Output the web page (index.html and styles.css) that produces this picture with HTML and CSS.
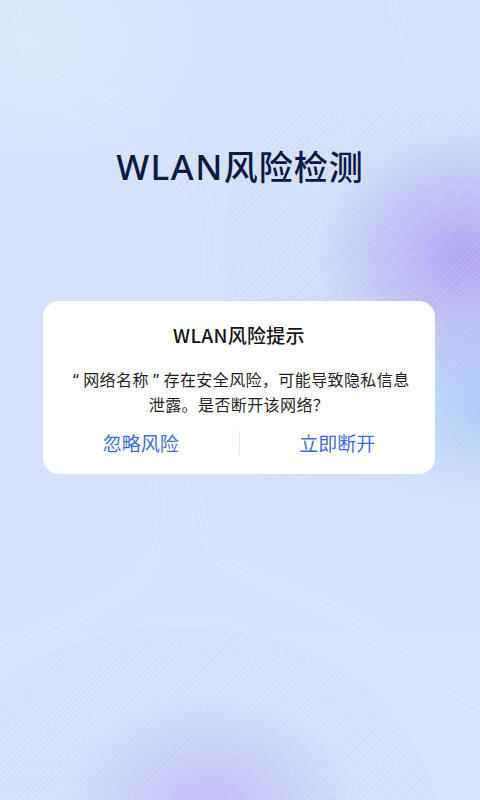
FILE: index.html
```html
<!DOCTYPE html>
<html lang="zh-CN">
<head>
<meta charset="utf-8">
<title>WLAN风险检测</title>
<link rel="stylesheet" href="styles.css">
</head>
<body>
<div class="screen">
  <div class="blob blob-right"></div>
  <div class="blob blob-bottom"></div>
  <svg class="bg-lines" width="480" height="800" viewBox="0 0 480 800" aria-hidden="true">
    <g fill="none" stroke="#ffffff" stroke-opacity="0.2" stroke-width="1">
      <path d="M12 0 C 14 50, 30 75, 70 88 C 120 104, 160 125, 185 165 C 200 195, 205 240, 205 300"/>
      <path d="M18 0 C 20 48, 36 71, 76 84 C 126 100, 166 121, 191 161 C 206 191, 211 236, 211 300"/>
      <path d="M24 0 C 26 46, 42 67, 82 80 C 132 96, 172 117, 197 157 C 212 187, 217 232, 217 300"/>
      <path d="M0 96 C 40 98, 80 110, 110 130 C 140 150, 170 172, 190 200"/>
      <path d="M0 102 C 40 104, 80 116, 110 136 C 140 156, 170 178, 190 206"/>
      <path d="M390 0 C 392 40, 402 62, 430 76 C 455 90, 470 108, 480 125"/>
      <path d="M396 0 C 398 40, 408 58, 436 72 C 461 86, 474 100, 480 110"/>
      <path d="M402 0 C 404 36, 414 54, 442 68 C 464 80, 476 92, 480 98"/>
      <path d="M150 480 C 154 530, 150 565, 120 585 C 90 605, 40 625, 0 645"/>
      <path d="M156 480 C 160 530, 156 569, 126 589 C 96 609, 46 629, 0 651"/>
      <path d="M162 480 C 166 530, 162 573, 132 593 C 102 613, 52 633, 0 657"/>
      <path d="M188 480 C 190 530, 205 565, 245 580 C 295 600, 335 612, 365 637 C 405 667, 435 695, 480 715"/>
      <path d="M194 480 C 196 530, 211 561, 251 576 C 301 596, 341 608, 371 633 C 411 663, 441 691, 480 709"/>
      <path d="M200 480 C 202 530, 217 557, 257 572 C 307 592, 347 604, 377 629 C 417 659, 447 687, 480 703"/>
      <path d="M0 705 C 40 685, 80 655, 120 635 C 150 620, 190 610, 230 625 C 270 645, 300 665, 340 690 C 380 715, 420 740, 480 760"/>
      <path d="M0 713 C 40 693, 80 663, 120 643 C 150 628, 190 618, 230 633 C 270 653, 300 673, 340 698 C 380 723, 420 748, 480 768"/>
      <path d="M0 721 C 40 701, 80 671, 120 651 C 150 636, 190 626, 230 641 C 270 661, 300 681, 340 706 C 380 731, 420 756, 480 776"/>
      <path d="M232 300 C 240 250, 258 215, 298 190 C 328 170, 345 150, 350 120"/>
      <path d="M238 300 C 246 250, 264 219, 304 194 C 334 174, 351 154, 356 124"/>
    </g>
  </svg>

  <div class="content">
    <h1 class="page-title"><span class="latin">WLAN</span>风险检测</h1>
    <div class="dialog">
      <div class="dialog-title">WLAN风险提示</div>
      <p class="dialog-text"><span class="line"><span class="quote">“</span>网络名称<span class="quote">”</span>存在安全风险，可能导致隐私信息</span><span class="line">泄露。是否断开该网络？</span></p>
      <div class="dialog-actions">
        <button class="action">忽略风险</button>
        <span class="divider"></span>
        <button class="action">立即断开</button>
      </div>
    </div>
  </div>
</div>
</body>
</html>
```

FILE: styles.css
```css
* { box-sizing: border-box; }

html, body {
  margin: 0;
  padding: 0;
}

body {
  width: 480px;
  height: 800px;
  overflow: hidden;
  font-family: "Noto Sans CJK SC", "Noto Sans", sans-serif;
}

.screen {
  position: relative;
  width: 480px;
  height: 800px;
  overflow: hidden;
  background:
    radial-gradient(ellipse 220px 160px at 30px 40px, rgba(226, 235, 251, 0.7), rgba(226, 235, 251, 0) 100%),
    linear-gradient(180deg, #d4e2f9 0%, #d3e2fa 45%, #d7e6fc 100%);
}

.bg-lines {
  position: absolute;
  left: 0;
  top: 0;
}

.blob {
  position: absolute;
  pointer-events: none;
}

.blob-right {
  left: 226px;
  top: 108px;
  width: 330px;
  height: 440px;
  border-radius: 120px 40px 40px 150px / 110px 40px 40px 200px;
  background:
    repeating-linear-gradient(135deg, rgba(255,255,255,0.12) 0 1px, rgba(255,255,255,0) 1px 4px),
    radial-gradient(ellipse 150px 130px at 240px 150px, rgba(172, 160, 238, 0.95), rgba(172, 160, 238, 0) 100%),
    radial-gradient(ellipse 110px 120px at 260px 320px, rgba(160, 196, 242, 0.95), rgba(160, 196, 242, 0) 100%),
    linear-gradient(160deg, rgba(210, 222, 248, 0.4), rgba(196, 208, 246, 0.5));
  -webkit-mask-image: linear-gradient(180deg, #000 0%, #000 62%, transparent 92%);
  mask-image: linear-gradient(180deg, #000 0%, #000 62%, transparent 92%);
}

.blob-bottom {
  left: -80px;
  top: 626px;
  width: 520px;
  height: 420px;
  border-radius: 50%;
  background:
    repeating-linear-gradient(135deg, rgba(255,255,255,0.12) 0 1px, rgba(255,255,255,0) 1px 4px),
    radial-gradient(ellipse 150px 110px at 290px 180px, rgba(192, 188, 244, 0.95), rgba(192, 188, 244, 0) 100%),
    linear-gradient(180deg, rgba(204, 218, 246, 0.35), rgba(200, 210, 246, 0.45));
}

.content {
  position: relative;
  display: flex;
  flex-direction: column;
  align-items: flex-start;
}

.page-title {
  margin: 144px 0 0 0;
  width: 480px;
  text-align: center;
  font-size: 34px;
  line-height: 44px;
  font-weight: 500;
  color: #0c1845;
  letter-spacing: 1px;
}

.latin {
  font-family: "Noto Sans", sans-serif;
  font-size: 35px;
  letter-spacing: 1.5px;
}

.dialog {
  margin: 112px 0 0 43px;
  width: 392px;
  background: #ffffff;
  border-radius: 16px;
  padding: 21px 20px 0 20px;
  display: flex;
  flex-direction: column;
  align-items: center;
}

.dialog-title {
  font-size: 19px;
  line-height: 26px;
  font-weight: 500;
  color: #151515;
  letter-spacing: 0.3px;
}

.dialog-text {
  margin: 19px 0 0 0;
  font-size: 16px;
  line-height: 24px;
  color: #1f1f1f;
  text-align: center;
  letter-spacing: 0.4px;
}

.line {
  display: block;
  white-space: nowrap;
}

.quote {
  font-family: "Noto Sans", sans-serif;
  letter-spacing: 0;
  margin: 0 4.5px;
}

.dialog-actions {
  margin: 6px -20px 10px -20px;
  width: 392px;
  height: 42px;
  display: flex;
  align-items: center;
}

.action {
  flex: 1;
  background: none;
  border: none;
  padding: 0;
  font-family: "Noto Sans CJK SC", "Noto Sans", sans-serif;
  font-size: 19px;
  line-height: 26px;
  color: #3c6ddd;
}

.divider {
  width: 1px;
  height: 24px;
  background: #ececec;
}
```
